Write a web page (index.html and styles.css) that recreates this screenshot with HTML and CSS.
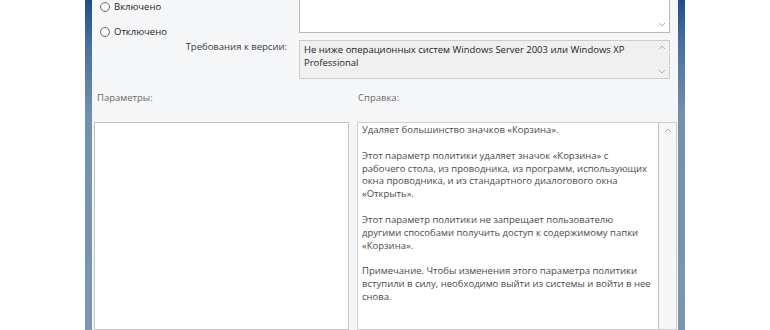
FILE: index.html
```html
<!DOCTYPE html>
<html lang="ru">
  <head>
    <meta charset="UTF-8" />
    <meta name="viewport" content="width=device-width, initial-scale=1.0" />
    <title>Удалить значок «Корзина» с рабочего стола</title>
    <link rel="stylesheet" href="styles.css">
  </head>

  <body>
    <div class="window">
      <div class="dialog">
        <!-- State and comment -->
        <div class="state-row">
          <div class="radios">
            <label class="radio"><span class="radio-dot"></span>Включено</label>
            <label class="radio"><span class="radio-dot"></span>Отключено</label>
          </div>
          <div class="field comment-field">
            <div class="field-body"></div>
            <div class="scrollbar scrollbar-end">
              <svg class="arrow" width="8" height="5" viewBox="0 0 8 5"><path d="M1 1 L4 4 L7 1" /></svg>
            </div>
          </div>
        </div>

        <!-- Supported on -->
        <div class="version-row">
          <div class="version-label">Требования к версии:</div>
          <div class="field version-field">
            <div class="field-body field-text">
              Не ниже операционных систем Windows Server 2003 или Windows XP<br>Professional
            </div>
            <div class="scrollbar">
              <svg class="arrow" width="8" height="5" viewBox="0 0 8 5"><path d="M1 4 L4 1 L7 4" /></svg>
              <svg class="arrow" width="8" height="5" viewBox="0 0 8 5"><path d="M1 1 L4 4 L7 1" /></svg>
            </div>
          </div>
        </div>

        <!-- Options / Help -->
        <div class="panel-labels">
          <span class="panel-label">Параметры:</span>
          <span class="panel-label help-label">Справка:</span>
        </div>
        <div class="panels">
          <div class="options-box"></div>
          <div class="help-box">
            <div class="help-text">
              <p>Удаляет большинство значков «Корзина».</p>
              <p>Этот параметр политики удаляет значок «Корзина» с<br>рабочего стола, из проводника, из программ, использующих<br>окна проводника, и из стандартного диалогового окна<br>«Открыть».</p>
              <p>Этот параметр политики не запрещает пользователю<br>другими способами получить доступ к содержимому папки<br>«Корзина».</p>
              <p>Примечание. Чтобы изменения этого параметра политики<br>вступили в силу, необходимо выйти из системы и войти в нее<br>снова.</p>
            </div>
            <div class="help-scroll">
              <svg class="arrow" width="8" height="5" viewBox="0 0 8 5"><path d="M1 4 L4 1 L7 4" /></svg>
            </div>
          </div>
        </div>
      </div>
    </div>
  </body>
</html>
```

FILE: styles.css
```css
/* Global Styles */
body {
  margin: 0;
  padding: 0;
  height: 330px;
  overflow: hidden;
  background: #fff;
  font-family: "Open Sans", "Noto Sans", sans-serif;
  font-size: 9.5px;
  line-height: 13px;
  color: #222;
}

.window {
  margin-left: 85px;
  width: 600px;
  height: 330px;
  padding: 0 7px;
  box-sizing: border-box;
  background: linear-gradient(180deg, #224d8c 0, #4a70a0 45px, #7390ab 115px, #7c97af 100%);
}

.dialog {
  height: 100%;
  display: flex;
  flex-direction: column;
  background: linear-gradient(180deg, #f6f7f8 0, #f3f4f5 100%);
  overflow: hidden;
}

/* Top rows */
.state-row,
.version-row {
  display: grid;
  grid-template-columns: 207px 371px;
}

.state-row {
  height: 33px;
}

.radios {
  display: flex;
  flex-direction: column;
  gap: 12px;
  padding-left: 8px;
}

.radio {
  display: flex;
  align-items: center;
  gap: 4px;
  color: #1c1c1c;
}

.radio-dot {
  width: 10px;
  height: 10px;
  border: 1px solid #6f6f6f;
  border-radius: 50%;
  box-sizing: border-box;
  background: radial-gradient(circle at 50% 40%, #fff 0, #ececec 100%);
}

.field {
  display: flex;
  box-sizing: border-box;
}

.field-body {
  flex: 1;
  min-width: 0;
}

.scrollbar {
  width: 15px;
  display: flex;
  flex-direction: column;
  justify-content: space-between;
  align-items: center;
  padding: 4px 0;
}

.scrollbar-end {
  justify-content: flex-end;
  padding-bottom: 5px;
}

.arrow {
  display: block;
}

.arrow path {
  fill: none;
  stroke: #b0b0b0;
  stroke-width: 1;
}

.comment-field {
  height: 33px;
  background: #fff;
  border: 1px solid #b9b9b9;
  border-top: none;
}

.version-row {
  margin-top: 7px;
}

.version-label {
  text-align: right;
  padding-right: 12px;
  color: #3a3a3a;
}

.version-field {
  height: 39px;
  background: #f0f0f0;
  border: 1px solid #cdcdcd;
}

.field-text {
  padding: 2px 4px;
  color: #1e1e1e;
}

/* Options and help panels */
.panel-labels,
.panels {
  display: grid;
  grid-template-columns: 255px 320px;
  column-gap: 8px;
  padding-left: 2px;
}

.panel-labels {
  margin-top: 12px;
}

.panel-label {
  padding-left: 3px;
  color: #6a6a6a;
}

.help-label {
  padding-left: 1px;
}

.panels {
  flex: 1;
  margin-top: 18px;
}

.options-box {
  background: #fff;
  border: 1px solid #c3c3c3;
}

.help-box {
  display: flex;
  border: 1px solid #cfcfcf;
}

.help-text {
  flex: 1;
  min-width: 0;
  overflow: hidden;
  padding: 1px 4px;
  background: #fff;
  border-right: 1px solid #c3c3c3;
  color: #4a4a4a;
  white-space: nowrap;
  line-height: 12.85px;
}

.help-text p {
  margin: 0 0 12.85px;
}

.help-scroll {
  width: 17px;
  display: flex;
  justify-content: center;
  padding-top: 5px;
  background: #f6f6f6;
}
```
